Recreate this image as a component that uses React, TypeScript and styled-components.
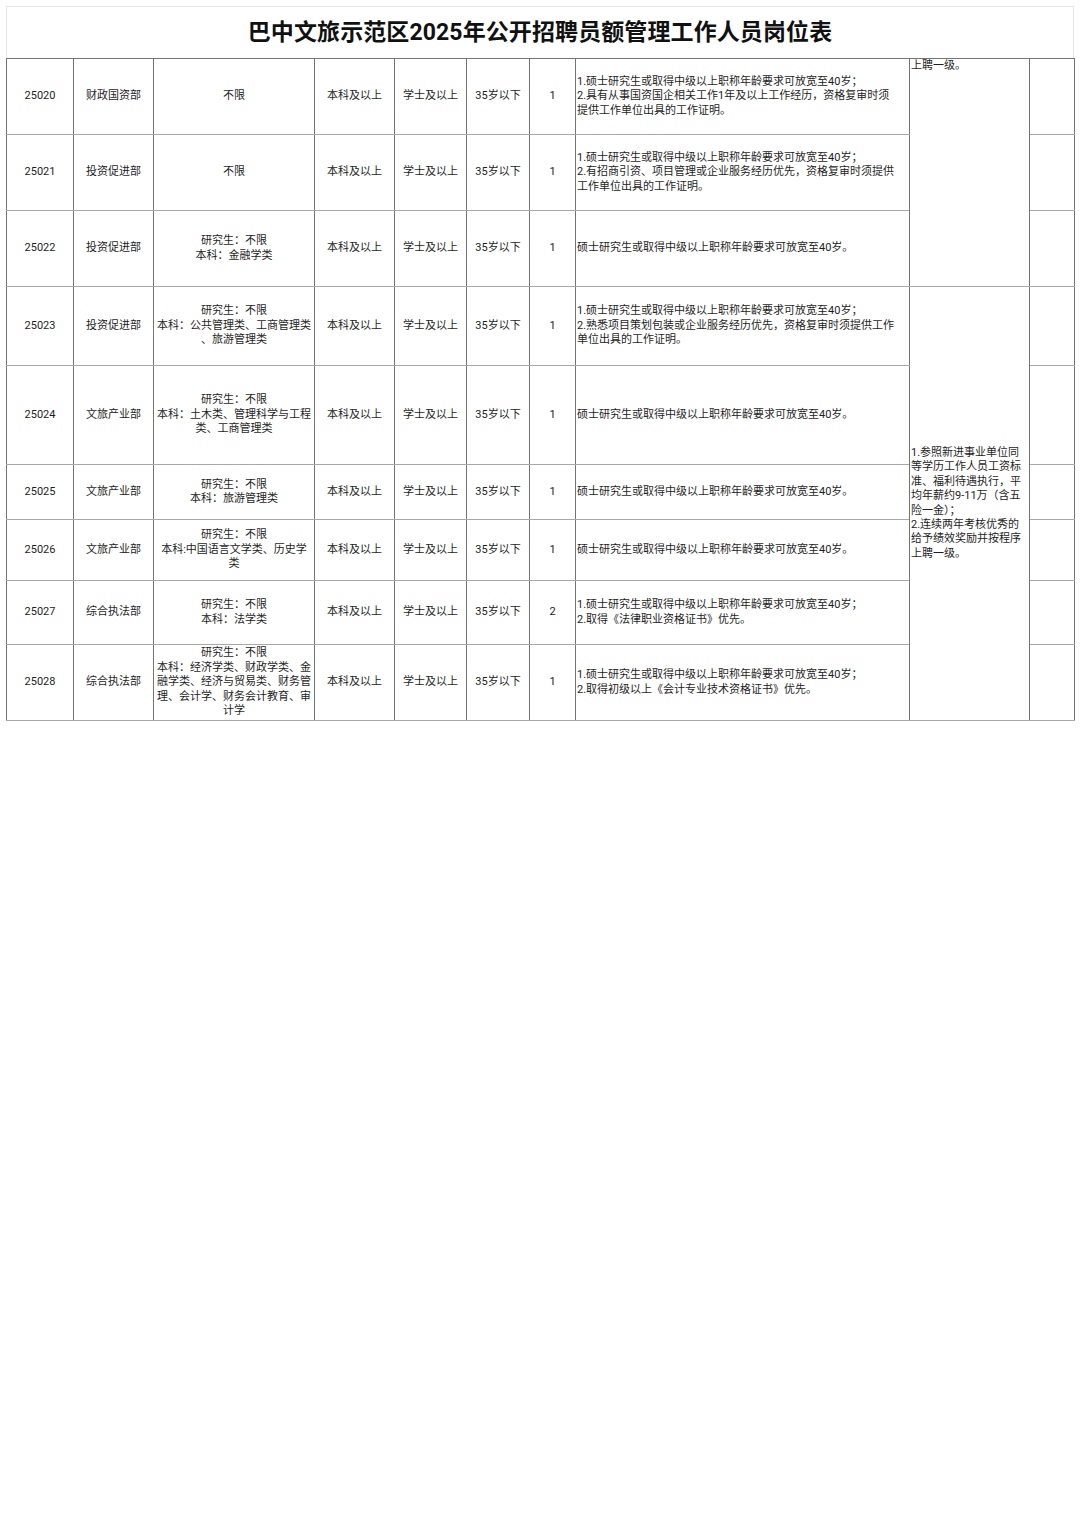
import React from "react";
import styled, { createGlobalStyle } from "styled-components";

const GlobalStyle = createGlobalStyle`
  html, body {
    margin: 0;
    padding: 0;
    background: #ffffff;
  }
  body {
    font-family: Roboto, "Noto Sans CJK SC", sans-serif;
    color: #1e1e1e;
  }
`;

const Page = styled.div`
  width: 1080px;
  min-height: 1522px;
  padding: 6px 0 0 6px;
  box-sizing: border-box;
  background: #ffffff;
`;

const Sheet = styled.div`
  width: 1068px;
`;

const TitleBar = styled.div`
  height: 52px;
  box-sizing: border-box;
  border: 1px solid #e6e6e6;
  border-bottom: none;
  display: flex;
  align-items: center;
  justify-content: center;
  font-family: Roboto, "Noto Sans CJK SC", sans-serif;
  font-weight: 700;
  font-size: 23px;
  letter-spacing: 0.1px;
  color: #111;
  padding-bottom: 5px;
`;

const Table = styled.table`
  width: 1068px;
  table-layout: fixed;
  border-collapse: collapse;
  font-size: 11px;
  line-height: 14.4px;
  border-top: 1px solid #747474;
  border-bottom: 1px solid #8a8a8a;
`;

const Row = styled.tr<{ $h: number }>`
  height: ${(p) => p.$h}px;
`;

const Cell = styled.td<{ $align?: "left" | "center"; $top?: boolean }>`
  border-left: 1px solid #747474;
  border-right: 1px solid #747474;
  border-bottom: 1px solid #a8a8a8;
  padding: 0 1px;
  text-align: ${(p) => p.$align ?? "center"};
  vertical-align: ${(p) => (p.$top ? "top" : "middle")};
  overflow: hidden;
  white-space: nowrap;
`;

const Line = styled.div`
  white-space: nowrap;
`;

const Benefit = styled.div`
  padding-top: 0;
`;

const widths = [67, 80, 161, 80, 72, 63, 46, 334, 120, 45];

type Post = {
  code: string;
  dept: string;
  major: string[];
  count: string;
  note: string[];
  h: number;
};

const FIRST = "1.硕士研究生或取得中级以上职称年龄要求可放宽至40岁；";
const SOLO = "硕士研究生或取得中级以上职称年龄要求可放宽至40岁。";

const posts: Post[] = [
  {
    code: "25020",
    dept: "财政国资部",
    major: ["不限"],
    count: "1",
    note: [FIRST, "2.具有从事国资国企相关工作1年及以上工作经历，资格复审时须", "提供工作单位出具的工作证明。"],
    h: 76,
  },
  {
    code: "25021",
    dept: "投资促进部",
    major: ["不限"],
    count: "1",
    note: [FIRST, "2.有招商引资、项目管理或企业服务经历优先，资格复审时须提供", "工作单位出具的工作证明。"],
    h: 76,
  },
  {
    code: "25022",
    dept: "投资促进部",
    major: ["研究生：不限", "本科：金融学类"],
    count: "1",
    note: [SOLO],
    h: 76,
  },
  {
    code: "25023",
    dept: "投资促进部",
    major: ["研究生：不限", "本科：公共管理类、工商管理类", "、旅游管理类"],
    count: "1",
    note: [FIRST, "2.熟悉项目策划包装或企业服务经历优先，资格复审时须提供工作", "单位出具的工作证明。"],
    h: 79,
  },
  {
    code: "25024",
    dept: "文旅产业部",
    major: ["研究生：不限", "本科：土木类、管理科学与工程", "类、工商管理类"],
    count: "1",
    note: [SOLO],
    h: 99,
  },
  {
    code: "25025",
    dept: "文旅产业部",
    major: ["研究生：不限", "本科：旅游管理类"],
    count: "1",
    note: [SOLO],
    h: 55,
  },
  {
    code: "25026",
    dept: "文旅产业部",
    major: ["研究生：不限", "本科:中国语言文学类、历史学", "类"],
    count: "1",
    note: [SOLO],
    h: 61,
  },
  {
    code: "25027",
    dept: "综合执法部",
    major: ["研究生：不限", "本科：法学类"],
    count: "2",
    note: [FIRST, "2.取得《法律职业资格证书》优先。"],
    h: 64,
  },
  {
    code: "25028",
    dept: "综合执法部",
    major: [
      "研究生：不限",
      "本科：经济学类、财政学类、金",
      "融学类、经济与贸易类、财务管",
      "理、会计学、财务会计教育、审",
      "计学",
    ],
    count: "1",
    note: [FIRST, "2.取得初级以上《会计专业技术资格证书》优先。"],
    h: 76,
  },
];

const benefit = [
  "1.参照新进事业单位同",
  "等学历工作人员工资标",
  "准、福利待遇执行，平",
  "均年薪约9-11万（含五",
  "险一金）；",
  "2.连续两年考核优秀的",
  "给予绩效奖励并按程序",
  "上聘一级。",
];

export default function App() {
  return (
    <Page>
      <GlobalStyle />
      <Sheet>
        <TitleBar>巴中文旅示范区2025年公开招聘员额管理工作人员岗位表</TitleBar>
        <Table>
          <colgroup>
            {widths.map((w, i) => (
              <col key={i} style={{ width: w }} />
            ))}
          </colgroup>
          <tbody>
            {posts.map((p, i) => (
              <Row key={p.code} $h={p.h}>
                <Cell>{p.code}</Cell>
                <Cell>{p.dept}</Cell>
                <Cell>
                  {p.major.map((m, j) => (
                    <Line key={j}>{m}</Line>
                  ))}
                </Cell>
                <Cell>本科及以上</Cell>
                <Cell>学士及以上</Cell>
                <Cell>35岁以下</Cell>
                <Cell>{p.count}</Cell>
                <Cell $align="left">
                  {p.note.map((n, j) => (
                    <Line key={j}>{n}</Line>
                  ))}
                </Cell>
                {i === 0 && (
                  <Cell $align="left" $top rowSpan={3}>
                    <Benefit>上聘一级。</Benefit>
                  </Cell>
                )}
                {i === 3 && (
                  <Cell $align="left" rowSpan={6}>
                    {benefit.map((b, j) => (
                      <Line key={j}>{b}</Line>
                    ))}
                  </Cell>
                )}
                <Cell />
              </Row>
            ))}
          </tbody>
        </Table>
      </Sheet>
    </Page>
  );
}
